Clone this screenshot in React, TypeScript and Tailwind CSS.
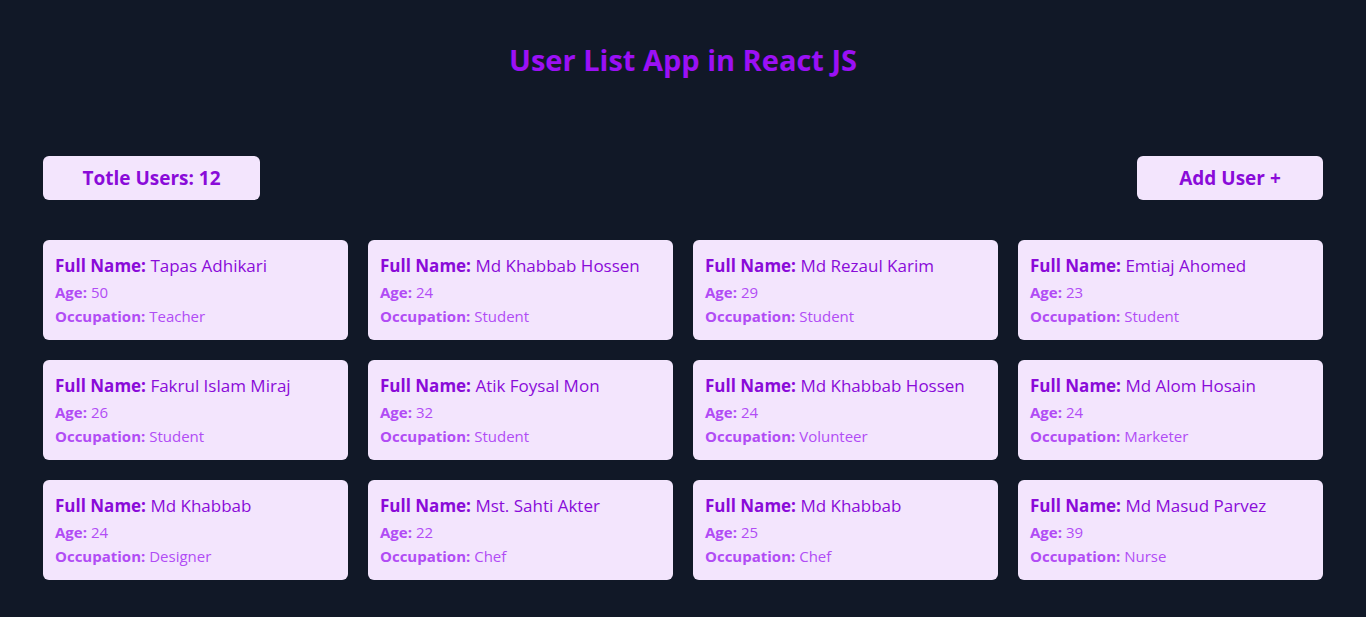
import React from "react";

interface User {
  name: string;
  age: number;
  occupation: string;
}

const users: User[] = [
  { name: "Tapas Adhikari", age: 50, occupation: "Teacher" },
  { name: "Md Khabbab Hossen", age: 24, occupation: "Student" },
  { name: "Md Rezaul Karim", age: 29, occupation: "Student" },
  { name: "Emtiaj Ahomed", age: 23, occupation: "Student" },
  { name: "Fakrul Islam Miraj", age: 26, occupation: "Student" },
  { name: "Atik Foysal Mon", age: 32, occupation: "Student" },
  { name: "Md Khabbab Hossen", age: 24, occupation: "Volunteer" },
  { name: "Md Alom Hosain", age: 24, occupation: "Marketer" },
  { name: "Md Khabbab", age: 24, occupation: "Designer" },
  { name: "Mst. Sahti Akter", age: 22, occupation: "Chef" },
  { name: "Md Khabbab", age: 25, occupation: "Chef" },
  { name: "Md Masud Parvez", age: 39, occupation: "Nurse" },
];

const UserCard = ({ user }: { user: User }) => (
  <div className="bg-[#f3e5fd] rounded-md px-3 py-3">
    <p className="text-[17px] leading-7 text-[#8a0bd9]">
      <span className="font-bold">Full Name:</span> {user.name}
    </p>
    <p className="text-[15px] leading-6 text-[#b14cf5]">
      <span className="font-bold">Age:</span> {user.age}
    </p>
    <p className="text-[15px] leading-6 text-[#b14cf5]">
      <span className="font-bold">Occupation:</span> {user.occupation}
    </p>
  </div>
);

const App = () => {
  return (
    <div className="min-h-screen bg-[#111827] font-['Open_Sans',sans-serif] pb-10">
      <h1 className="pt-[42px] text-center text-[29px] leading-9 font-bold text-[#9b10f5]">User List App in React JS</h1>
      <div className="max-w-[1280px] mx-auto mt-[78px]">
        <div className="flex justify-between">
          <div className="bg-[#f3e5fd] rounded-md h-11 w-[217px] flex items-center justify-center text-[19px] font-bold text-[#8a0bd9]">
            Totle Users: {users.length}
          </div>
          <button className="bg-[#f3e5fd] rounded-md h-11 w-[186px] flex items-center justify-center text-[19px] font-bold text-[#8a0bd9]">
            Add User +
          </button>
        </div>
        <div className="grid grid-cols-4 gap-5 mt-10">
          {users.map((u, i) => (
            <UserCard key={i} user={u} />
          ))}
        </div>
      </div>
    </div>
  );
};

export default App;
